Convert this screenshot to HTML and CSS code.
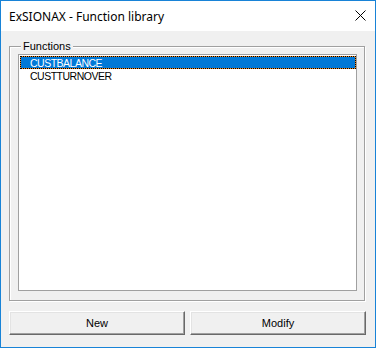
FILE: index.html
```html
<!DOCTYPE html>
<html>
<head>
<meta charset="utf-8">
<link rel="stylesheet" href="styles.css">
</head>
<body>
<div class="window">
  <div class="titlebar">
    <span class="title">ExSIONAX - Function library</span>
    <svg class="close" width="11" height="11" viewBox="0 0 11 11"><path d="M0.5 0.5 L10.5 10.5 M10.5 0.5 L0.5 10.5" stroke="#000" stroke-width="1" fill="none"/></svg>
  </div>
  <div class="content">
    <div class="group">
      <span class="legend">Functions</span>
      <div class="listbox">
        <div class="item selected">CUSTBALANCE</div>
        <div class="item">CUSTTURNOVER</div>
      </div>
    </div>
    <div class="buttons">
      <button class="btn">New</button>
      <button class="btn">Modify</button>
    </div>
  </div>
</div>
</body>
</html>
```
FILE: styles.css
```css
html, body { margin: 0; padding: 0; background: #fff; }
.window {
  width: 376px; height: 348px; box-sizing: border-box;
  border: 1px solid #1883d7;
  display: flex; flex-direction: column;
  font-family: "Liberation Sans", Arial, sans-serif;
  color: #000;
}
.titlebar {
  height: 30px; background: #fff;
  display: flex; align-items: center;
  padding-left: 8px; padding-right: 9px;
}
.title { font-family: "Noto Sans", sans-serif; font-size: 12px; }
.close { margin-left: auto; align-self: flex-start; margin-top: 9px; }
.content {
  flex: 1; background: #f0f0f0;
  padding: 15px 9px 12px 8px;
  display: flex; flex-direction: column;
}
.group {
  position: relative;
  width: 356px; height: 255px; box-sizing: border-box;
  border: 1px solid #a0a0a0;
  box-shadow: inset 1px 1px 0 #fff, 1px 1px 0 #fff;
  padding: 7px 7px 9px 8px;
  display: flex;
}
.legend {
  position: absolute; left: 11px; top: -8px;
  background: #f0f0f0; padding: 0 2px;
  font-size: 11px; line-height: 14px;
}
.listbox {
  flex: 1; background: #fff;
  border: 1px solid #a0a0a0;
  padding: 1px 0 0 1px;
}
.item {
  height: 13px; box-sizing: border-box;
  padding-left: 9px;
  font-size: 10.5px; line-height: 12px; letter-spacing: -0.5px;
  border: 1px solid transparent;
  white-space: nowrap;
}
.item.selected {
  color: #fff;
  border: 1px dotted #000;
  background: linear-gradient(#0078d7, #0078d7) padding-box, linear-gradient(#f08a24, #f08a24) border-box;
}
.buttons {
  margin-top: 10px;
  display: grid; grid-template-columns: 176px 176px; column-gap: 5px;
}
.btn {
  height: 24px; margin: 0; padding: 0;
  font-family: "Liberation Sans", Arial, sans-serif; font-size: 11px; color: #000;
  background: #f0f0f0;
  border: 1px solid; border-color: #fff #696969 #696969 #fff;
  box-shadow: inset -1px -1px 0 #a0a0a0, inset 1px 1px 0 #e3e3e3;
}
```
